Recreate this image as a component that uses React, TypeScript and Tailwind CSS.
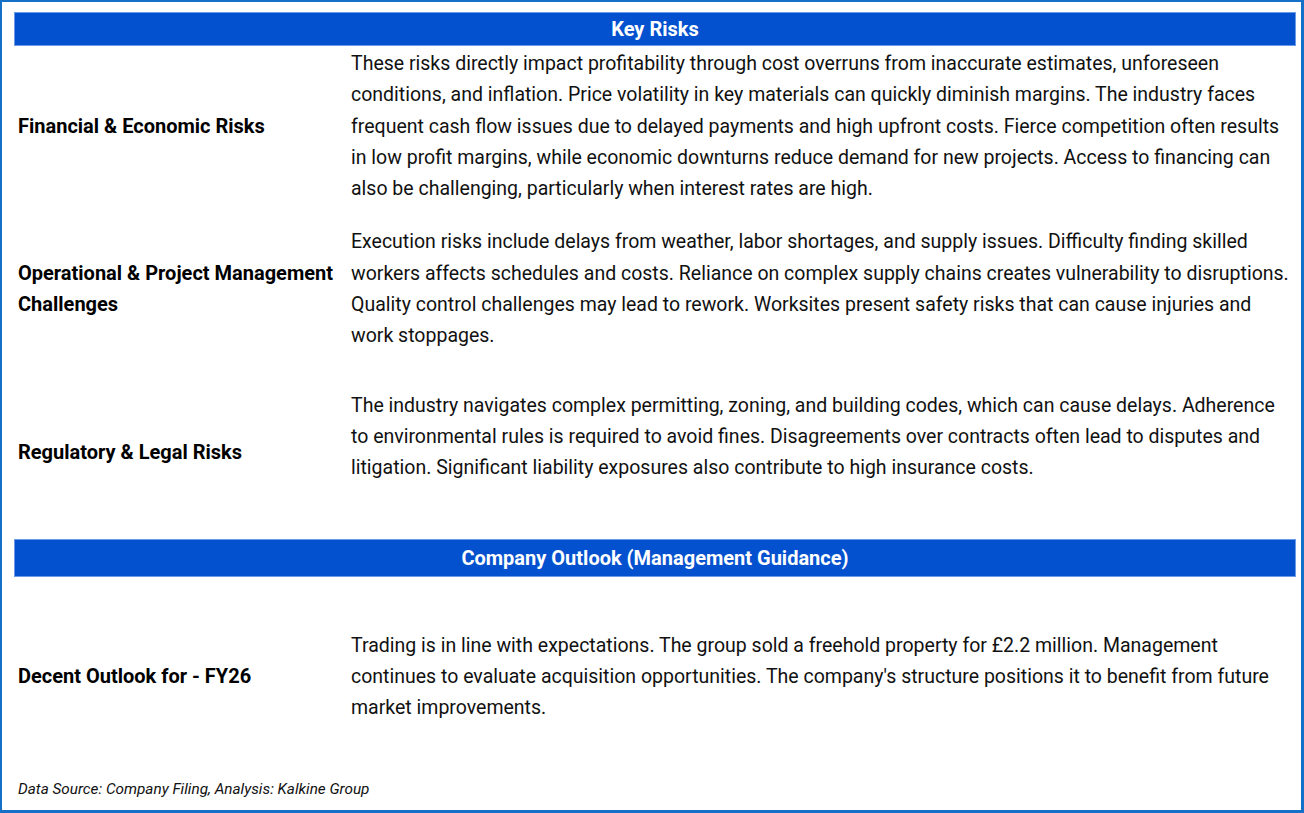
import React from 'react';

const font = { fontFamily: 'Roboto, "Open Sans", sans-serif' };

interface RowProps {
    label: string[];
    lines: string[];
    className?: string;
}

function SectionHeader({ title, className }: { title: string; className?: string }) {
    return (
        <div className={`bg-[#0451cf] border border-[#6b9be6] text-white font-bold text-[20px] flex items-center justify-center ${className}`}>
            {title}
        </div>
    );
}

function Row({ label, lines, className }: RowProps) {
    return (
        <div className={`grid grid-cols-[337px_1fr] items-center ${className}`}>
            <div className="pl-[4px] font-bold text-[20px] leading-[31.3px] text-black">
                {label.map((l, i) => (
                    <div key={i} className="whitespace-nowrap">{l}</div>
                ))}
            </div>
            <div className="text-[19.5px] leading-[31.3px] text-[#111]">
                {lines.map((l, i) => (
                    <div key={i} className="whitespace-nowrap h-[31.3px]">{l}</div>
                ))}
            </div>
        </div>
    );
}

export default function App() {
    return (
        <div style={font} className="w-[1304px] h-[813px] bg-white">
            <div className="w-full h-full border-l-2 border-t-2 border-r-[3px] border-b-[3px] border-[#1570c8] pt-[10px] pl-[12px] pr-[5px] flex flex-col">
                <SectionHeader title="Key Risks" className="h-[34px]" />

                <Row
                    className="pt-[2px]"
                    label={['Financial & Economic Risks']}
                    lines={[
                        'These risks directly impact profitability through cost overruns from inaccurate estimates, unforeseen',
                        'conditions, and inflation. Price volatility in key materials can quickly diminish margins. The industry faces',
                        'frequent cash flow issues due to delayed payments and high upfront costs. Fierce competition often results',
                        'in low profit margins, while economic downturns reduce demand for new projects. Access to financing can',
                        'also be challenging, particularly when interest rates are high.',
                    ]}
                />

                <Row
                    className="mt-[22px]"
                    label={['Operational & Project Management', 'Challenges']}
                    lines={[
                        'Execution risks include delays from weather, labor shortages, and supply issues. Difficulty finding skilled',
                        'workers affects schedules and costs. Reliance on complex supply chains creates vulnerability to disruptions.',
                        'Quality control challenges may lead to rework. Worksites present safety risks that can cause injuries and',
                        'work stoppages.',
                    ]}
                />

                <Row
                    className="mt-[38px]"
                    label={['Regulatory & Legal Risks']}
                    lines={[
                        'The industry navigates complex permitting, zoning, and building codes, which can cause delays. Adherence',
                        'to environmental rules is required to avoid fines. Disagreements over contracts often lead to disputes and',
                        'litigation. Significant liability exposures also contribute to high insurance costs.',
                        '',
                    ]}
                />

                <SectionHeader title="Company Outlook (Management Guidance)" className="h-[38px] mt-[24px]" />

                <Row
                    className="mt-[53px]"
                    label={['Decent Outlook for - FY26']}
                    lines={[
                        'Trading is in line with expectations. The group sold a freehold property for £2.2 million. Management',
                        "continues to evaluate acquisition opportunities. The company's structure positions it to benefit from future",
                        'market improvements.',
                    ]}
                />

                <div className="mt-[54px] pl-[4px] italic text-[15.3px] text-[#111]">
                    Data Source: Company Filing, Analysis: Kalkine Group
                </div>
            </div>
        </div>
    );
}
